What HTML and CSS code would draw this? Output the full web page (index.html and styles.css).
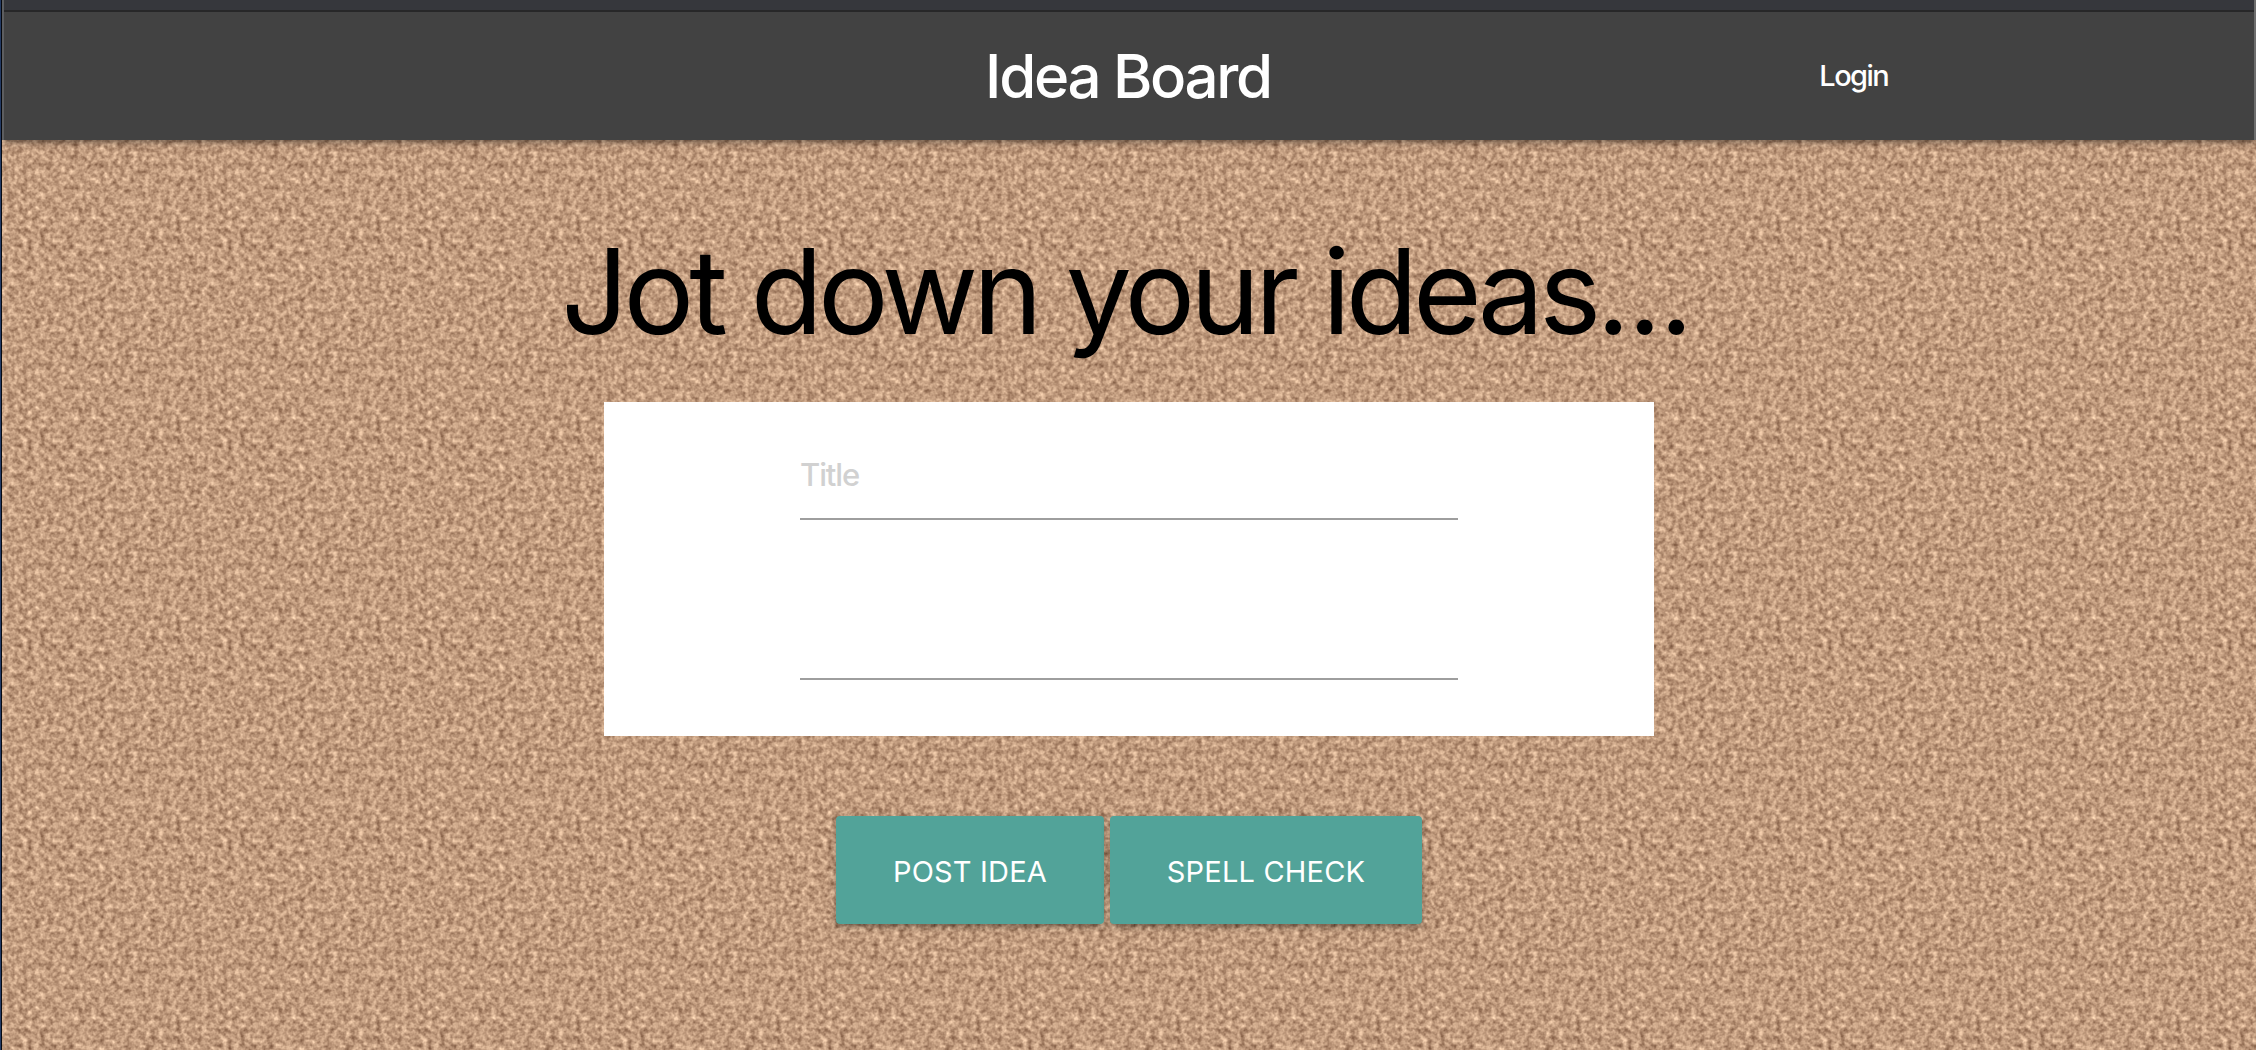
FILE: index.html
```html
<!DOCTYPE html>
<html lang="en">
<head>
<meta charset="utf-8">
<title>Idea Board</title>
<link rel="stylesheet" href="styles.css">
</head>
<body>
<div class="window">
  <header class="header">
    <div class="toolbar"></div>
    <nav class="nav">
      <a class="brand">Idea Board</a>
      <a class="login">Login</a>
    </nav>
  </header>
  <main class="board">
    <h1 class="heading">Jot down your ideas<span class="dots">...</span></h1>
    <form class="card">
      <input class="field" type="text" placeholder="Title" aria-label="Title">
      <textarea class="field field-body" aria-label="Idea"></textarea>
    </form>
    <div class="actions">
      <button class="btn btn-post" type="button">POST IDEA</button>
      <button class="btn btn-spell" type="button">SPELL CHECK</button>
    </div>
  </main>
</div>
</body>
</html>
```
FILE: styles.css
```css
* {
  box-sizing: border-box;
}

body {
  margin: 0;
  font-family: Inter, "Liberation Sans", sans-serif;
  background: #080a10;
}

.window {
  display: flex;
  flex-direction: column;
  height: 1050px;
  border-left: 1px solid #233a63;
  padding-left: 1px;
  overflow: hidden;
}

.header {
  position: relative;
  border-left: 2px solid #5d5e60;
  border-right: 2px solid #6d6d6d;
  background: #424242;
  box-shadow: 0 4px 4px rgba(0, 0, 0, 0.14), 0 6px 2px -4px rgba(0, 0, 0, 0.12), 0 2px 10px rgba(0, 0, 0, 0.2);
}

.toolbar {
  height: 12px;
  background: #36373c;
  border-bottom: 2px solid #272728;
}

.nav {
  display: grid;
  grid-template-columns: 1fr auto 1fr;
  align-items: center;
  height: 128px;
  color: #fff;
}

.brand {
  grid-column: 2;
  padding-right: 2px;
  font-size: 60px;
  font-weight: 450;
  letter-spacing: -2.3px;
}

.login {
  justify-self: end;
  padding: 0 366px 2px 0;
  font-size: 29px;
  font-weight: 450;
  letter-spacing: -1.6px;
}

.board {
  flex: 1;
  display: flex;
  flex-direction: column;
  align-items: center;
  padding-top: 86px;
  background: #c19c7e url("data:image/svg+xml,%3Csvg xmlns='http://www.w3.org/2000/svg' width='200' height='200'%3E%3Cfilter id='c' x='0' y='0' width='100%25' height='100%25' color-interpolation-filters='sRGB'%3E%3CfeTurbulence type='fractalNoise' baseFrequency='.155 .135' numOctaves='3' seed='8' stitchTiles='stitch'/%3E%3CfeColorMatrix values='0 0 0 1 0 0 0 0 1 0 0 0 0 1 0 0 0 0 0 1' result='a'/%3E%3CfeTurbulence type='fractalNoise' baseFrequency='.235 .26' numOctaves='2' seed='31' stitchTiles='stitch'/%3E%3CfeColorMatrix values='0 0 0 1 0 0 0 0 1 0 0 0 0 1 0 0 0 0 0 1'/%3E%3CfeComposite in2='a' operator='arithmetic' k2='.5' k3='.5'/%3E%3CfeColorMatrix values='.85 0 0 0 .33 0 .85 0 0 .183 0 0 .78 0 .103 0 0 0 0 1'/%3E%3C/filter%3E%3Crect width='200' height='200' filter='url(%23c)'/%3E%3C/svg%3E");
}

.heading {
  margin: 0 0 46px;
  padding-right: 6px;
  font-size: 118px;
  font-weight: 400;
  line-height: 130px;
  letter-spacing: -5.1px;
  white-space: nowrap;
  color: #000;
}

.dots {
  letter-spacing: -2.5px;
}

.card {
  display: flex;
  flex-direction: column;
  width: 1050px;
  height: 334px;
  padding: 30px 196px 56px;
  background: #fff;
}

.field {
  width: 100%;
  height: 88px;
  margin: 0;
  padding: 0 0 2px;
  border: 0;
  border-bottom: 2px solid #9e9e9e;
  background: transparent;
  font: 450 31px Inter, "Liberation Sans", sans-serif;
  letter-spacing: -1.1px;
  outline: 0;
  resize: none;
}

.field::placeholder {
  color: #d1d1d1;
  opacity: 1;
}

.field-body {
  margin-top: 72px;
}

.actions {
  display: flex;
  gap: 6px;
  margin-top: 80px;
}

.btn {
  height: 108px;
  padding: 3px 0 0;
  border: 0;
  border-radius: 4px;
  background: #52a399;
  color: #fff;
  font: 400 29px Inter, "Liberation Sans", sans-serif;
  letter-spacing: 0.2px;
  box-shadow: 0 4px 4px rgba(0, 0, 0, 0.14), 0 6px 2px -4px rgba(0, 0, 0, 0.12), 0 2px 10px rgba(0, 0, 0, 0.2);
}

.btn-post {
  width: 268px;
}

.btn-spell {
  width: 312px;
}
```
